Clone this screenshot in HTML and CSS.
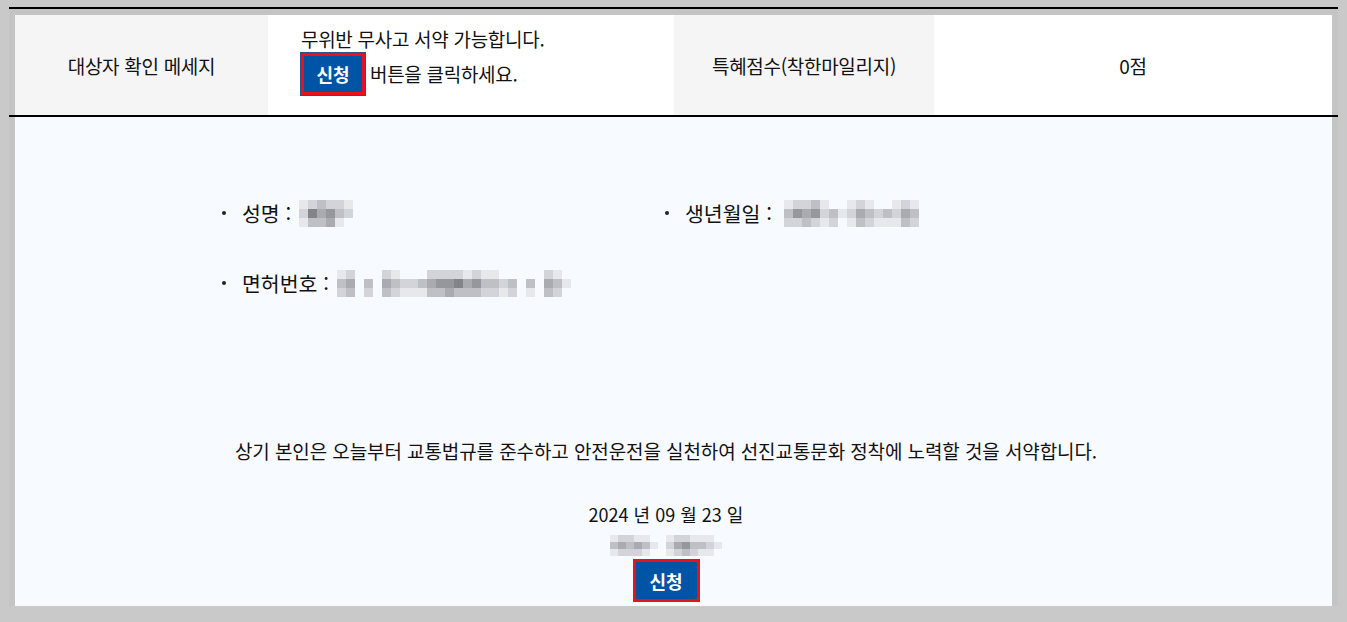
FILE: index.html
```html
<!DOCTYPE html>
<html lang="ko">
<head>
<meta charset="utf-8">
<title>무위반 무사고 서약</title>
<link rel="stylesheet" href="styles.css">
</head>
<body>
<div class="page">
  <div class="frame">
    <div class="info-row">
      <div class="cell head">대상자 확인 메세지</div>
      <div class="cell body msg">
        <p>무위반 무사고 서약 가능합니다.</p>
        <p class="msg-line"><span class="btn small">신청</span><span>버튼을 클릭하세요.</span></p>
      </div>
      <div class="cell head">특혜점수(착한마일리지)</div>
      <div class="cell body center">0점</div>
    </div>
  </div>
  <div class="divider"></div>
  <div class="frame">
    <div class="pledge">
      <div class="fields">
        <div class="field"><span class="dot"></span><span>성명 :</span><span class="mosaic"><i class="s1"></i><i class="s2"></i><i class="s1"></i><i class="s2"></i><i class="s6"></i><i class="s3"></i><i class="s3"></i><i class="s4"></i><i class="s3"></i><i class="s2"></i><i class="s5"></i><i class="s4"></i><i class="s2"></i><i class="s3"></i><i class="s1"></i><i class="s1"></i><i class="s2"></i><i class="s0"></i></span></div>
        <div class="field"><span class="dot"></span><span>생년월일 :</span><span class="mosaic wide"><i class="s1"></i><i class="s3"></i><i class="s2"></i><i class="s2"></i><i class="s5"></i><i class="s2"></i><i class="s2"></i><i class="s4"></i><i class="s3"></i><i class="s3"></i><i class="s5"></i><i class="s2"></i><i class="s1"></i><i class="s2"></i><i class="s1"></i><i class="s0"></i><i class="s3"></i><i class="s2"></i><i class="s0"></i><i class="s1"></i><i class="s0"></i><i class="s1"></i><i class="s2"></i><i class="s1"></i><i class="s2"></i><i class="s4"></i><i class="s3"></i><i class="s1"></i><i class="s3"></i><i class="s2"></i><i class="s0"></i><i class="s2"></i><i class="s1"></i><i class="s0"></i><i class="s3"></i><i class="s1"></i><i class="s1"></i><i class="s2"></i><i class="s1"></i><i class="s2"></i><i class="s4"></i><i class="s3"></i><i class="s1"></i><i class="s3"></i><i class="s2"></i></span></div>
        <div class="field"><span class="dot"></span><span>면허번호 :</span><span class="mosaic"><i class="s1"></i><i class="s3"></i><i class="s2"></i><i class="s2"></i><i class="s4"></i><i class="s3"></i><i class="s0"></i><i class="s0"></i><i class="s0"></i><i class="s0"></i><i class="s3"></i><i class="s2"></i><i class="s0"></i><i class="s0"></i><i class="s0"></i><i class="s2"></i><i class="s4"></i><i class="s3"></i><i class="s1"></i><i class="s3"></i><i class="s2"></i><i class="s0"></i><i class="s2"></i><i class="s1"></i><i class="s0"></i><i class="s2"></i><i class="s1"></i><i class="s0"></i><i class="s3"></i><i class="s1"></i><i class="s2"></i><i class="s4"></i><i class="s3"></i><i class="s2"></i><i class="s5"></i><i class="s3"></i><i class="s2"></i><i class="s5"></i><i class="s4"></i><i class="s2"></i><i class="s6"></i><i class="s3"></i><i class="s1"></i><i class="s4"></i><i class="s3"></i><i class="s2"></i><i class="s5"></i><i class="s3"></i><i class="s1"></i><i class="s3"></i><i class="s2"></i><i class="s1"></i><i class="s3"></i><i class="s2"></i><i class="s0"></i><i class="s2"></i><i class="s1"></i><i class="s0"></i><i class="s3"></i><i class="s2"></i><i class="s0"></i><i class="s0"></i><i class="s0"></i><i class="s0"></i><i class="s3"></i><i class="s1"></i><i class="s0"></i><i class="s0"></i><i class="s0"></i><i class="s2"></i><i class="s4"></i><i class="s3"></i><i class="s1"></i><i class="s3"></i><i class="s2"></i><i class="s0"></i><i class="s1"></i><i class="s0"></i></span></div>
      </div>
      <p class="statement">상기 본인은 오늘부터 교통법규를 준수하고 안전운전을 실천하여 선진교통문화 정착에 노력할 것을 서약합니다.</p>
      <p class="date">2024 년 09 월 23 일</p>
      <div class="signer">
        <span class="mosaic tiny"><i class="s1"></i><i class="s3"></i><i class="s1"></i><i class="s2"></i><i class="s4"></i><i class="s2"></i><i class="s2"></i><i class="s3"></i><i class="s2"></i><i class="s1"></i><i class="s4"></i><i class="s2"></i><i class="s1"></i><i class="s3"></i><i class="s1"></i><i class="s0"></i><i class="s1"></i><i class="s0"></i></span>
        <span class="mosaic tiny"><i class="s1"></i><i class="s2"></i><i class="s1"></i><i class="s2"></i><i class="s4"></i><i class="s2"></i><i class="s2"></i><i class="s5"></i><i class="s3"></i><i class="s1"></i><i class="s3"></i><i class="s2"></i><i class="s1"></i><i class="s3"></i><i class="s1"></i><i class="s1"></i><i class="s2"></i><i class="s1"></i><i class="s0"></i><i class="s1"></i><i class="s0"></i></span>
      </div>
      <span class="btn big">신청</span>
    </div>
  </div>
</div>
</body>
</html>
```

FILE: styles.css
```css
* { box-sizing: border-box; }
html, body { margin: 0; padding: 0; }
body {
  background: #c9c9c9;
  font-family: "Noto Sans CJK KR", "Noto Sans", sans-serif;
  color: #111;
  width: 1347px;
  height: 622px;
  overflow: hidden;
}
p { margin: 0; }
.page {
  padding: 7px 9px 0 9px;
}
.frame {
  background: #c4c4c4;
  padding: 0 6px;
}
.frame:first-child {
  border-top: 2px solid #000;
  padding-top: 6px;
}
.divider {
  height: 2px;
  background: #000;
}
.info-row {
  display: grid;
  grid-template-columns: 253px 406px 260px 398px;
  height: 100px;
}
.cell {
  display: flex;
  align-items: center;
  justify-content: center;
  font-size: 19px;
  letter-spacing: -0.3px;
}
.cell.head { background: #f5f5f5; }
.cell.body { background: #fff; }
.cell.msg {
  flex-direction: column;
  align-items: flex-start;
  justify-content: center;
  padding-left: 33px;
  gap: 1px;
  line-height: 26px;
  padding-bottom: 9px;
}
.msg-line {
  display: flex;
  align-items: center;
  gap: 5px;
}
.btn {
  display: inline-flex;
  align-items: center;
  justify-content: center;
  background: #0054a6;
  color: #fff;
  font-weight: 700;
  font-size: 18px;
  letter-spacing: 0;
  border: 3px solid #e8121c;
}
.btn.small {
  width: 64px;
  height: 42px;
  outline: 1px solid #2a4f8a;
}
.btn.big {
  width: 67px;
  height: 43px;
  margin-top: 3px;
}
.pledge {
  background: #f7faff;
  height: 489px;
  display: flex;
  flex-direction: column;
  align-items: center;
  padding: 0 15px 3px 0;
}
.fields {
  align-self: stretch;
  display: grid;
  grid-template-columns: 443px 1fr;
  row-gap: 40px;
  padding: 81px 0 0 205px;
}
.field {
  display: flex;
  align-items: center;
  height: 30px;
  font-size: 20.5px;
}
.dot {
  width: 4px;
  height: 4px;
  border-radius: 50%;
  background: #222;
  margin: 0 16px 0 2px;
}
.mosaic {
  display: inline-grid;
  grid-template-rows: repeat(3, 9px);
  grid-auto-flow: column;
  grid-auto-columns: 9px;
  margin-left: 8px;
}
.mosaic.wide { margin-left: 12px; }
.mosaic i { display: block; }
.mosaic.tiny {
  grid-template-rows: repeat(3, 7px);
  grid-auto-columns: 8px;
  margin: 0;
}
.s0 { background: #f7faff; }
.s1 { background: #e6e8ec; }
.s2 { background: #d3d4d9; }
.s3 { background: #bfc0c5; }
.s4 { background: #aaabb1; }
.s5 { background: #96979d; }
.s6 { background: #82848a; }
.statement {
  margin-top: 140px;
  font-size: 19px;
  line-height: 26px;
  letter-spacing: -0.1px;
}
.date {
  margin-top: 37px;
  font-size: 18px;
  line-height: 26px;
}
.signer {
  display: flex;
  gap: 8px;
  margin-top: 8px;
}
```
